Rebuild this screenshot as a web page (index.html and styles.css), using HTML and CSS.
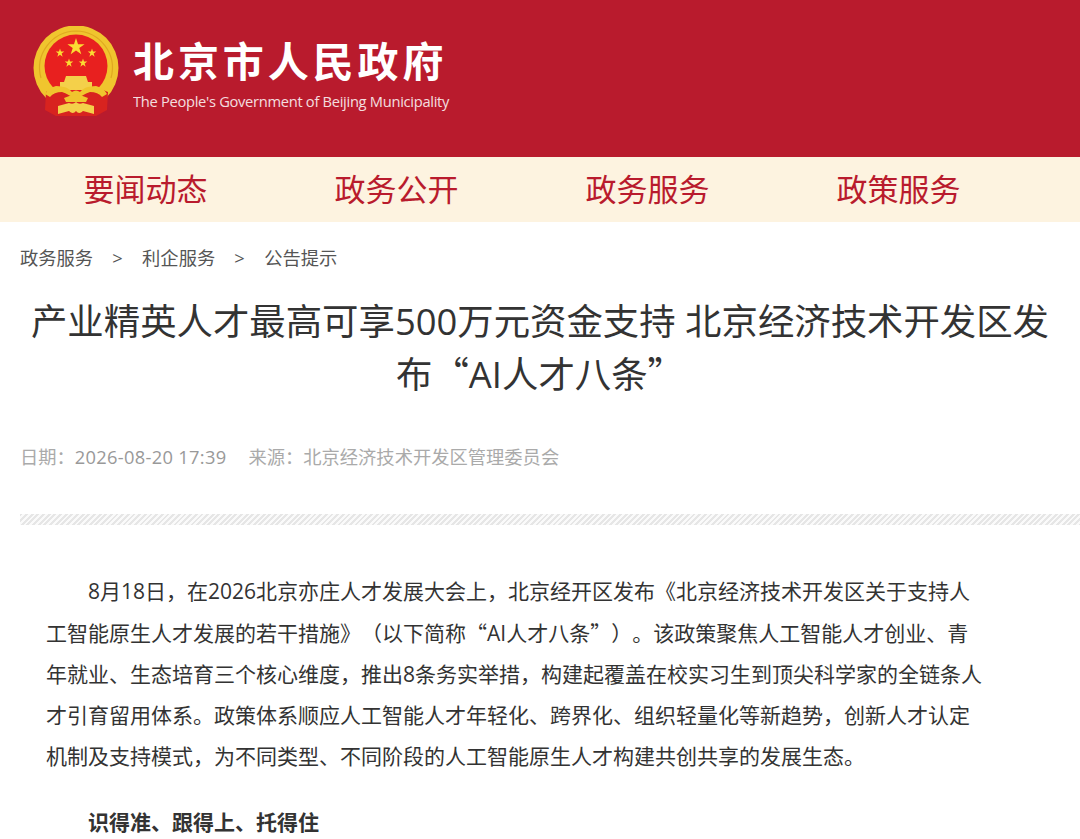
FILE: index.html
```html
<!DOCTYPE html>
<html lang="zh-CN">
<head>
    <meta charset="UTF-8">
    <meta name="viewport" content="width=device-width, initial-scale=1.0">
    <title>北京市人民政府</title>
    <link rel="stylesheet" href="styles.css">
</head>
<body>
    <div class="header">
        <svg class="emblem" viewBox="0 0 88 92" width="88" height="92">
            <defs>
                <polygon id="star" points="0,-1 0.225,-0.31 0.951,-0.31 0.363,0.118 0.588,0.809 0,0.382 -0.588,0.809 -0.363,0.118 -0.951,-0.31 -0.225,-0.31"/>
            </defs>
            <path d="M14 72 A42.500 42.500 0 1 1 74 72 L66 62 H22 Z" fill="#f0c52e"/>
            <path d="M9 52 A37 37 0 0 1 44 5 A37 37 0 0 1 79 52" fill="none" stroke="#dfa920" stroke-width="1.2"/>
            <circle cx="44" cy="40" r="31.500" fill="#e8201f"/>
            <g fill="#fbdc33">
                <use href="#star" transform="translate(44 21) scale(9)"/>
                <use href="#star" transform="translate(28 27) scale(4.500)"/>
                <use href="#star" transform="translate(60 27) scale(4.500)"/>
                <use href="#star" transform="translate(37 37) scale(4.500)"/>
                <use href="#star" transform="translate(51 37) scale(4.500)"/>
            </g>
            <path d="M34 50 H54 L56 56 H60 V64 H28 V56 H32 Z" fill="#f4d04a"/>
            <path d="M14 66 L22 62 L44 72 L66 62 L76 66 L75 84 L64 90 H24 L13 84 Z" fill="#d8231f"/>
            <path d="M13 68 Q16 62 24 60 Q36 60 40 66 Q44 63 48 66 Q52 60 64 60 Q72 62 75 68 L70 71 Q66 66 58 66 Q50 68 44 76 Q38 68 30 66 Q22 66 18 71 Z" fill="#f0c52e"/>
            <path d="M26 80 L37 77 Q41 79 44 76 Q47 79 51 77 L62 80 V88 L51 85 Q47 89 44 85 Q41 89 37 85 L26 88 Z" fill="#f4d04a"/>
            <path d="M32 72 Q44 66 56 72 L54 76 H34 Z" fill="#f0c52e"/>
        </svg>
        <div class="site-name">
            <div class="site-cn">北京市人民政府</div>
            <div class="site-en">The People's Government of Beijing Municipality</div>
        </div>
    </div>

    <div class="nav">
        <a href="#" class="nav-item">要闻动态</a>
        <a href="#" class="nav-item">政务公开</a>
        <a href="#" class="nav-item">政务服务</a>
        <a href="#" class="nav-item">政策服务</a>
    </div>

    <div class="breadcrumb">
        <a href="#">政务服务</a>
        <span class="sep">&gt;</span>
        <a href="#">利企服务</a>
        <span class="sep">&gt;</span>
        <a href="#">公告提示</a>
    </div>

    <h1 class="title">产业精英人才最高可享500万元资金支持 北京经济技术开发区发布<span class="cjk">“</span>AI人才八条<span class="cjk">”</span></h1>

    <div class="meta">
        <span>日期：<b>2026-08-20 17:39</b></span>
        <span>来源：北京经济技术开发区管理委员会</span>
    </div>

    <div class="divider"></div>

    <div class="article">
        <p>8月18日，在2026北京亦庄人才发展大会上，北京经开区发布《北京经济技术开发区关于支持人工智能原生人才发展的若干措施》（以下简称<span class="cjk">“</span>AI人才八条<span class="cjk">”</span>）。该政策聚焦人工智能人才创业、青年就业、生态培育三个核心维度，推出8条务实举措，构建起覆盖在校实习生到顶尖科学家的全链条人才引育留用体系。政策体系顺应人工智能人才年轻化、跨界化、组织轻量化等新趋势，创新人才认定机制及支持模式，为不同类型、不同阶段的人工智能原生人才构建共创共享的发展生态。</p>
        <p><strong>识得准、跟得上、托得住</strong></p>
    </div>
</body>
</html>
```

FILE: styles.css
```css
* {
    margin: 0;
    padding: 0;
    box-sizing: border-box;
}

body {
    font-family: "Open Sans", "Noto Sans CJK SC", sans-serif;
    background: white;
    color: #333;
    height: 839px;
    overflow: hidden;
    text-spacing-trim: space-all;
}

a {
    color: inherit;
    text-decoration: none;
}

.cjk {
    font-family: "Noto Sans CJK SC", sans-serif;
}

.header {
    height: 157px;
    background: #b91b2d;
    padding: 26px 0 0 32px;
    display: flex;
    align-items: flex-start;
    gap: 13px;
}

.site-name {
    color: white;
    padding-top: 3px;
}

.site-cn {
    font-family: "Noto Sans CJK SC", sans-serif;
    font-size: 41px;
    font-weight: 700;
    line-height: 60px;
    letter-spacing: 3.900px;
}

.site-en {
    font-size: 14.700px;
    line-height: 22px;
    letter-spacing: -0.300px;
    opacity: 0.85;
    margin-top: 1px;
}

.nav {
    height: 65px;
    background: #fdf3e0;
    padding: 0 0 4px 20px;
    display: flex;
    align-items: center;
}

.nav-item {
    width: 251px;
    text-align: center;
    font-size: 31px;
    color: #b91b2d;
    font-family: "Noto Sans CJK SC", sans-serif;
}

.breadcrumb {
    padding: 22px 0 0 20px;
    font-size: 18.300px;
    line-height: 28px;
    color: #555;
    display: flex;
}

.breadcrumb .sep {
    margin: 0 19.500px 0 19px;
}

.title {
    margin-top: 24px;
    padding: 0 20px;
    font-size: 36.400px;
    font-weight: 400;
    line-height: 51px;
    text-align: center;
    color: #333;
}

.meta {
    margin-top: 43px;
    padding-left: 20px;
    font-size: 18.300px;
    line-height: 28px;
    color: #aaa;
    display: flex;
    gap: 22px;
}

.meta b {
    font-weight: 400;
    color: #999;
    letter-spacing: 0.300px;
}

.divider {
    margin: 43px 0 0 20px;
    height: 11px;
    background: repeating-linear-gradient(135deg, #e6e6e6 0, #e6e6e6 2px, #fafafa 2px, #fafafa 4px);
}

.article {
    padding: 46px 95px 0 46px;
    font-size: 21px;
    line-height: 41px;
    color: #333;
}

.article p {
    text-indent: 2em;
    margin-bottom: 25px;
}
```
